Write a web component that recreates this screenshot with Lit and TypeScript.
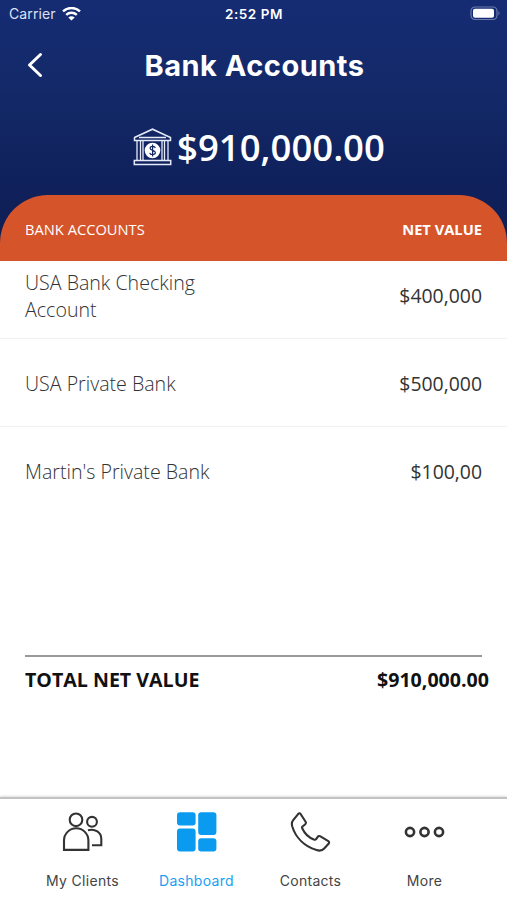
import { LitElement, html, css, svg } from "lit";
import { customElement } from "lit/decorators.js";
import { classMap } from "lit/directives/class-map.js";

const accounts = [
  { name: "USA Bank Checking Account", value: "$400,000", cls: "first" },
  { name: "USA Private Bank", value: "$500,000", cls: "" },
  { name: "Martin's Private Bank", value: "$100,00", cls: "last" },
];

const clientsIcon = svg`<g fill="none" stroke="#333" stroke-width="2.100">
  <circle cx="14" cy="7.800" r="6.300"/>
  <path d="M2 37.900V28.500a12.200 12.200 0 0 1 24.400 0v9.400Z"/>
  <circle cx="30" cy="9.800" r="4.900"/>
  <path d="M26 18.300c7.200-2 13.300 2.200 13.300 8.700v6.300H30"/></g>`;
const dashIcon = svg`<g fill="#0a9bf0">
  <rect x="1" y="0.300" width="18.600" height="13.200" rx="3"/>
  <rect x="22.200" y="0.300" width="18.200" height="22.700" rx="3"/>
  <rect x="1" y="16.400" width="18.600" height="23" rx="3"/>
  <rect x="22.200" y="26.200" width="18.200" height="13.200" rx="3"/></g>`;
const phoneIcon = svg`<path fill="none" stroke="#333" stroke-width="2.100" stroke-linejoin="round"
  d="M3.200 8.200 8.300 1.800Q9.500 .600 10.600 2L15.600 9.700Q16.300 11 15.300 12.200L12.500 14.500Q11.800 15.200 12.200 16.300C14.700 21.800 18.200 25.400 23.800 27.500Q25.200 28.100 26 27.300L27.700 24.800Q28.500 23.700 30 24.200L38.300 29.200Q39.600 30.200 38.800 31.500L34.200 36.500C32 39.100 29.500 39 26.500 38.100C14.500 34.300 5.500 25.500 2.200 14.300C1.500 11.700 1.700 10 3.200 8.200Z"/>`;
const moreIcon = svg`<g fill="none" stroke="#333" stroke-width="2.600">
  <circle cx="6" cy="20" r="4.100"/><circle cx="20.500" cy="20" r="4.100"/><circle cx="35" cy="20" r="4.100"/></g>`;

const tabs = [
  { label: "My Clients", icon: clientsIcon, active: false },
  { label: "Dashboard", icon: dashIcon, active: true },
  { label: "Contacts", icon: phoneIcon, active: false },
  { label: "More", icon: moreIcon, active: false },
];

@customElement("app-root")
export class AppRoot extends LitElement {
  static styles = css`
    :host { display: flex; flex-direction: column; width: 507px; height: 900px; overflow: hidden;
      background: #fff; color: #333; font-family: "Open Sans", sans-serif; }
    * { box-sizing: border-box; }
    svg { display: block; flex: none; }
    .hero { height: 261px; flex: none; display: flex; flex-direction: column;
      background: linear-gradient(#152c74, #132968 90px, #0f205a 195px, #0e1e52); color: #fff; }
    .status { height: 28px; display: grid; grid-template-columns: 1fr auto 1fr; align-items: center;
      padding: 0 6px 0 9px; font: 500 13px/28px Inter, sans-serif; }
    .carrier { display: flex; align-items: center; gap: 6px; font-weight: 400; font-size: 14px; color: #dce2f5; letter-spacing: 0.1px; }
    .time { font-weight: 600; font-size: 13.500px; letter-spacing: 0.550px; padding-right: 2px; }
    .battery { justify-self: end; }
    .nav { height: 74px; display: grid; grid-template-columns: 60px 1fr 60px; align-items: center; }
    .back { margin-left: 25px; }
    h1 { margin: 0; padding: 1px 0 0 2px; text-align: center; font: 700 29px/74px Inter, sans-serif; letter-spacing: 0.500px; }
    .balance { height: 93px; display: flex; align-items: center; justify-content: center; gap: 5px;
      padding: 0 0 4px 11px; font-size: 36.500px; font-weight: 600; }
    .heading { height: 66px; display: flex; justify-content: space-between; align-items: center;
      padding: 1px 25px 0; background: #d65429; border-radius: 48px 48px 0 0; font-size: 14.700px; }
    .heading b { font-weight: 700; }
    .row { height: 88px; display: flex; justify-content: space-between; align-items: center;
      padding: 1px 25px 0; border-bottom: 1px solid #f1f1f1; font-size: 19.600px; line-height: 27px; }
    .row.first { height: 78px; padding-bottom: 9px; }
    .row.last { border: 0; }
    .name { width: 190px; font-weight: 300; }
    .value { font-weight: 400; font-size: 19.400px; }
    .rule { height: 2px; margin: 140px 25px 0; background: #999; }
    .total { margin: 0 18px 0 25px; height: 44px; display: flex; justify-content: space-between;
      align-items: center; color: #111; font-size: 19.600px; font-weight: 700; }
    .tabs { margin-top: auto; height: 103px; flex: none; display: grid; grid-template-columns: repeat(4, 114px);
      justify-content: center; border-top: 2px solid #c2c2c2; box-shadow: 0 -1px 2px #ddd; }
    .tab { display: flex; flex-direction: column; align-items: center; padding-top: 13px; gap: 18px;
      font: 400 14px/22px Inter, sans-serif; letter-spacing: 0.3px; color: #444; }
    .tab.active { color: #1a9ff1; }
  `;

  render() {
    return html`
      <header class="hero">
        <div class="status">
          <div class="carrier"><span>Carrier</span>
            <svg width="19" height="15" viewBox="0 0 19 15" fill="none" stroke="#fff" stroke-width="2.400">
              <path d="M1 4.400a12.300 12.300 0 0 1 17 0M4.200 7.900a7.800 7.800 0 0 1 10.600 0"/>
              <path fill="#fff" stroke="none" d="M6.300 10.400q3.200-2.500 6.400 0L9.500 13.600Z"/>
            </svg></div>
          <span class="time">2:52 PM</span>
          <svg class="battery" width="31" height="16" viewBox="0 0 31 16">
            <rect x="1" y="1" width="26" height="12.500" rx="4" fill="none" stroke="#6b7bab" stroke-width="1.200"/>
            <rect x="3" y="2.800" width="21" height="9" rx="2" fill="#fff"/>
            <path d="M28.500 5q2.200 2.200 0 4.400Z" fill="#6b7bab"/>
          </svg>
        </div>
        <div class="nav">
          <svg class="back" width="20" height="28" viewBox="0 0 20 28" fill="none" stroke="#fff" stroke-width="3" stroke-linecap="round" stroke-linejoin="round">
            <path d="M15.500 2.500 4.500 13l11 10.500"/></svg>
          <h1>Bank Accounts</h1>
        </div>
        <div class="balance">
          <svg width="39" height="38" viewBox="0 0 39 38" fill="none" stroke="#e5eaf8" stroke-width="1.500">
            <path d="M1.500 9.500 19.500 1.200l18 8.300v3h-36ZM6 9.500h27"/>
            <path stroke-width="1.300" d="M4 13v19M7.500 13v19M10 13v19M29 13v19M31.500 13v19M35 13v19"/>
            <rect x="1.300" y="32.500" width="36.400" height="4"/>
            <circle cx="19.500" cy="22.500" r="7.800" fill="#fff" stroke="none"/>
            <path stroke="#12245f" stroke-width="1.200" d="M22.300 20c-.500-2-5.200-2.200-5.200.300 0 2.500 5.300 1.600 5.300 4.300 0 2.600-5.200 2.500-5.700.200M19.600 16.600v11.800"/>
          </svg><span class="amount">$910,000.00</span>
        </div>
        <div class="heading"><span>BANK ACCOUNTS</span><b>NET VALUE</b></div>
      </header>
      <main>
        ${accounts.map((a) => html`<div class="row ${a.cls}"><span class="name">${a.name}</span><span class="value">${a.value}</span></div>`)}
        <div class="rule"></div>
        <div class="total"><span>TOTAL NET VALUE</span><span>$910,000.00</span></div>
      </main>
      <nav class="tabs">
        ${tabs.map((t) => html`<div class=${classMap({ tab: true, active: t.active })}>
          <svg width="41" height="40" viewBox="0 0 41 40">${t.icon}</svg><span>${t.label}</span></div>`)}
      </nav>`;
  }
}
